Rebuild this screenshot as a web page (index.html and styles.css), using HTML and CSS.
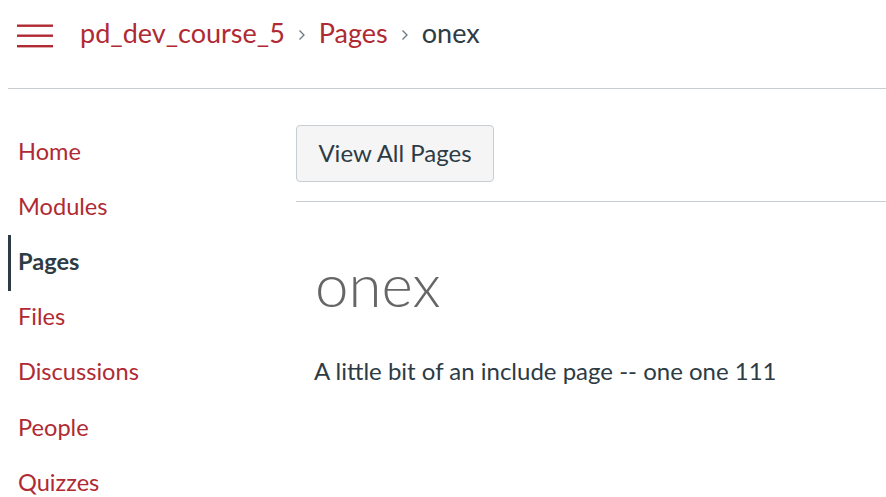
FILE: index.html
```html
<!DOCTYPE html>
<html>
<head>
<meta charset="utf-8">
<link rel="stylesheet" href="styles.css">
</head>
<body>
<header class="top">
  <button class="menu" aria-label="Menu">
    <svg width="36" height="24" viewBox="0 0 36 24"><rect x="0" y="0.5" width="36" height="2.4" fill="#b02a34"/><rect x="0" y="10.5" width="36" height="2.4" fill="#b02a34"/><rect x="0" y="21" width="36" height="2.4" fill="#b02a34"/></svg>
  </button>
  <nav class="crumbs">
    <a class="crumb" href="#">pd_dev_course_5</a>
    <span class="sep"><svg width="10" height="14" viewBox="0 0 10 14"><path d="M2.5 2.5 L7 7 L2.5 11.5" fill="none" stroke="#6b7780" stroke-width="1.3"/></svg></span>
    <a class="crumb" href="#">Pages</a>
    <span class="sep"><svg width="10" height="14" viewBox="0 0 10 14"><path d="M2.5 2.5 L7 7 L2.5 11.5" fill="none" stroke="#6b7780" stroke-width="1.3"/></svg></span>
    <span class="crumb current">onex</span>
  </nav>
</header>
<div class="main">
  <ul class="tabs">
    <li><a href="#">Home</a></li>
    <li><a href="#">Modules</a></li>
    <li class="active"><a href="#">Pages</a></li>
    <li><a href="#">Files</a></li>
    <li><a href="#">Discussions</a></li>
    <li><a href="#">People</a></li>
    <li><a href="#">Quizzes</a></li>
  </ul>
  <section class="content">
    <div class="toolbar">
      <button class="btn">View All Pages</button>
    </div>
    <h1 class="title">onex</h1>
    <p class="body">A little bit of an include page -- one one 111</p>
  </section>
</div>
</body>
</html>
```
FILE: styles.css
```css
* { box-sizing: border-box; }
html, body { margin: 0; padding: 0; background: #fff; }
body {
  padding: 0 0 0 8px;
  font-family: Lato, "Noto Sans", sans-serif;
  color: #2d3b45;
  overflow: hidden;
  height: 497px;
}
a { text-decoration: none; color: #b02a34; }
.top {
  height: 89px;
  border-bottom: 1px solid #c7cdd1;
  display: flex;
  align-items: flex-start;
  padding-top: 23px;
}
.menu {
  border: 0;
  background: none;
  padding: 0;
  margin: 1px 0 0 9px;
  width: 36px;
  height: 24px;
  display: block;
}
.menu svg { display: block; }
.crumbs {
  margin-left: 27px;
  display: flex;
  align-items: center;
  font-size: 27px;
  line-height: 20px;
}
.crumb { color: #b02a34; }
.crumb.current { color: #2d3b45; }
.sep { display: inline-flex; margin: 0 12px 0 12px; position: relative; top: 2px; }
.main { display: flex; }
.tabs {
  list-style: none;
  margin: 0;
  padding: 0;
  width: 288px;
  padding-top: 36px;
}
.tabs li {
  height: 55.2px;
  display: flex;
  align-items: center;
  padding-left: 10px;
  padding-bottom: 4px;
  font-size: 23.6px;
}
.tabs li.active {
  border-left: 3px solid #2d3b45;
  padding-left: 7px;
}
.tabs li.active a { color: #2d3b45; font-weight: 700; }
.content { flex: 1; }
.toolbar {
  padding-top: 36px;
  padding-bottom: 19px;
  border-bottom: 1px solid #c7cdd1;
}
.btn {
  font-family: Lato, "Noto Sans", sans-serif;
  font-size: 24px;
  color: #2d3b45;
  background: #f5f5f5;
  border: 1px solid #c7cdd1;
  border-radius: 4px;
  height: 57px;
  width: 198px;
  padding: 0 0 3px;
}
.title {
  margin: 46px 0 0 19px;
  font-size: 60px;
  font-weight: 300;
  color: #666;
  line-height: 72px;
}
.body {
  margin: 34px 0 0 18px;
  font-size: 24px;
  line-height: 33px;
}
```
